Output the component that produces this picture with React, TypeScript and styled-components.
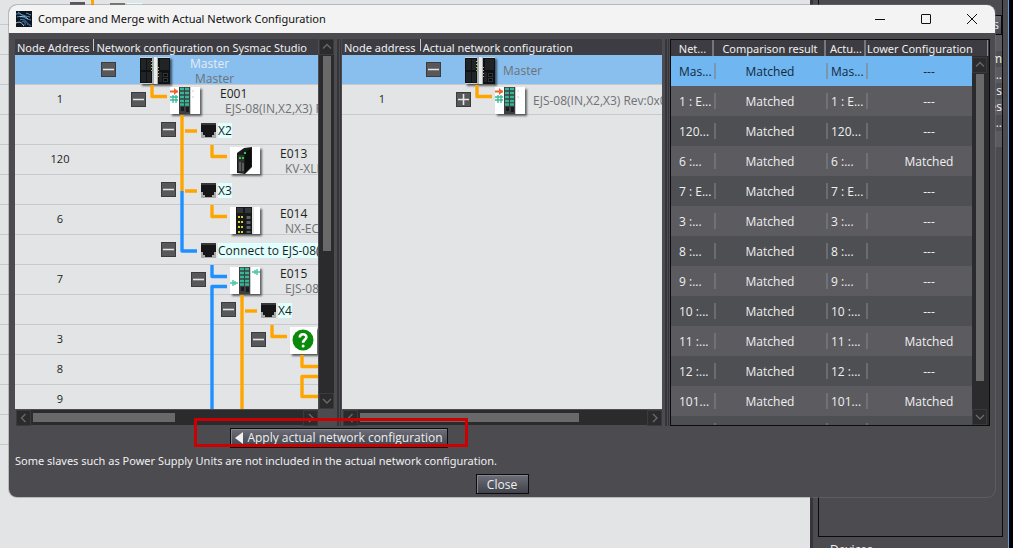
import React from "react";
import styled, { createGlobalStyle, css } from "styled-components";

const ORANGE = "#ffa500";
const BLUE = "#1e90ff";

const GlobalStyle = createGlobalStyle`
  * { box-sizing: border-box; }
  html, body, #root { height: 100%; margin: 0; }
  body {
    overflow: hidden;
    background: #4c4b50;
    color: #f0f0f0;
    font: 12px/16px "Open Sans", "Noto Sans", sans-serif;
  }
  button { font: inherit; color: inherit; padding: 0; border: 0; background: none; }
  svg { display: block; flex: none; }
`;

const captionFont = css`
  font-family: "Noto Sans", "Open Sans", sans-serif;
  font-size: 11px;
  font-weight: 400;
`;

/* ---------- application behind the dialog ---------- */

const Screen = styled.div`
  position: relative;
  height: 100%;
`;

const Backdrop = styled.div`
  display: flex;
  height: 100%;
  overflow: hidden;
`;

const EditorCanvas = styled.div`
  flex: 1;
  min-width: 0;
  background: #e2e4e6;
`;

const EditorLines = styled.div`
  height: 475px;
  padding-left: 70px;
  background: repeating-linear-gradient(#e2e4e6 0 29px, #c8c9ca 29px 30px) 0 -5px;
`;

const Gutter = styled.div`
  width: 8px;
  background: linear-gradient(90deg, #36363a 0 3px, #4c4b50 3px);
`;

const SidePane = styled.aside`
  width: 185px;
  display: flex;
  flex-direction: column;
`;

const SettingsBox = styled.section`
  flex: 1;
  min-height: 0;
  border: solid #0c0c0e;
  border-width: 0 1px 1px;
`;

const SettingsTitle = styled.h2`
  height: 15px;
  margin: 0;
  padding-right: 32px;
  text-align: right;
  font-size: 12px;
  line-height: 20px;
  font-weight: 400;
`;

const SideButton = styled.button`
  display: block;
  width: 100%;
  height: 20px;
  padding-right: 2px;
  text-align: right;
  border: 1px solid #0c0c0e;
  background: linear-gradient(#6d6e78, #45464e);
`;

const SideRow = styled.div<{ $alt?: boolean }>`
  height: 16px;
  text-align: right;
  background: ${(p) => (p.$alt ? "#4f5054" : "#5c5b60")};
`;

const DevicesTitle = styled.h2`
  height: 11px;
  margin: 0;
  padding: 5px 12px 0;
  font-size: 12px;
  line-height: 16px;
  font-weight: 400;
  overflow: hidden;
`;

const ScreenEdge = styled.div`
  width: 10px;
  background: linear-gradient(90deg, #4c4b50 0 5px, #5ba0e0 5px 6px, #000 6px);
`;

/* ---------- dialog frame ---------- */

const Dialog = styled.div`
  position: absolute;
  inset: 5px 18px 51px 9px;
  display: flex;
  flex-direction: column;
  overflow: hidden;
  border-radius: 8px;
  background: #4c4b50;
  box-shadow: 0 0 0 1px #77777a66;
`;

const TitleBar = styled.header`
  display: flex;
  align-items: center;
  flex: none;
  height: 28px;
  padding-left: 7px;
  background: #f3f3f3;
  color: #111;
`;

const Title = styled.h1`
  flex: 1;
  margin: 0 0 0 6px;
  ${captionFont}
  white-space: nowrap;
`;

const WindowButton = styled.button`
  display: grid;
  place-items: center;
  width: 46px;
  height: 28px;
`;

const Panels = styled.main`
  flex: 1;
  min-height: 0;
  display: grid;
  grid-template-columns: minmax(0, 320fr) 7px minmax(0, 321fr) 7px minmax(0, 320fr);
  grid-template-rows: minmax(0, 1fr) 22px;
  padding: 6px 5px 0 6px;
`;

const Splitter = styled.div`
  margin: 0 1px 0 2px;
  border: solid #36363a;
  border-width: 0 1px 0 2px;
`;

/* ---------- scroll bars ---------- */

const Bar = styled.div<{ $horizontal?: boolean }>`
  display: flex;
  background: #2b2b2d;
  ${(p) =>
    p.$horizontal
      ? css`flex-direction: row; height: 15px; margin-left: 1px;`
      : css`flex-direction: column; width: 15px;`}
`;

const BarButton = styled.button`
  display: grid;
  place-items: center;
  flex: none;
  width: 15px;
  height: 16px;
  border: 1px solid #3a3a3d;
`;

const Track = styled.div<{ $horizontal?: boolean }>`
  flex: 1;
  min-width: 0;
  min-height: 0;
  padding: ${(p) => (p.$horizontal ? "3px 2px" : "1px 4px")};
`;

const Thumb = styled.div<{ $horizontal?: boolean; $size: number }>`
  background: #69696a;
  ${(p) =>
    p.$horizontal
      ? css`width: ${p.$size}%; height: 9px;`
      : css`height: ${p.$size}%; width: 8px;`}
`;

const arrows = {
  up: "M1 6.5 5 2.5 9 6.5",
  down: "M1 3 5 7 9 3",
  left: "M6.5 1 2.5 5 6.5 9",
  right: "M3 1 7 5 3 9",
};

function Arrow({ to }: { to: keyof typeof arrows }) {
  return (
    <svg width="10" height="10" viewBox="0 0 10 10" fill="none" stroke="#69696c" strokeWidth="1.4">
      <path d={arrows[to]} />
    </svg>
  );
}

function ScrollBar({ horizontal, size }: { horizontal?: boolean; size: number }) {
  return (
    <Bar $horizontal={horizontal}>
      <BarButton aria-label={horizontal ? "Scroll left" : "Scroll up"}>
        <Arrow to={horizontal ? "left" : "up"} />
      </BarButton>
      <Track $horizontal={horizontal}>
        <Thumb $horizontal={horizontal} $size={size} />
      </Track>
      <BarButton aria-label={horizontal ? "Scroll right" : "Scroll down"}>
        <Arrow to={horizontal ? "right" : "down"} />
      </BarButton>
    </Bar>
  );
}

/* ---------- device trees ---------- */

const TreePanel = styled.section<{ $vertical?: boolean }>`
  min-height: 0;
  display: grid;
  grid-template-columns: minmax(0, 1fr) ${(p) => (p.$vertical ? "15px" : "")};
  grid-template-rows: minmax(0, 1fr) 15px;
  gap: 1px;
  padding: 0 1px 1px 0;
`;

const TreeView = styled.div`
  display: flex;
  flex-direction: column;
  min-height: 0;
  overflow: hidden;
  background: #e2e4e6;
`;

const TreeHeader = styled.div`
  display: flex;
  flex: none;
  height: 16px;
  padding-left: 2px;
  background: #3c3c42;
  white-space: nowrap;
  line-height: 18px;
  ${captionFont}
`;

const HeaderCell = styled.span`
  & + & {
    height: 12px;
    margin-left: 4px;
    padding-left: 2px;
    border-left: 1px solid #c8c8c8;
  }
`;

const TreeList = styled.ul`
  flex: 1;
  min-height: 0;
  margin: 0;
  padding: 0;
  overflow: hidden;
  list-style: none;
`;

const TreeRow = styled.li<{ $selected?: boolean }>`
  display: flex;
  align-items: flex-start;
  height: 30px;
  color: #1e1e20;
  white-space: nowrap;
  background: linear-gradient(transparent 29px, #c8c9ca 29px) ${(p) => (p.$selected ? "#88bfee" : "#e2e4e6")};
`;

const Address = styled.span<{ $wide?: boolean }>`
  flex: none;
  width: ${(p) => (p.$wide ? 86 : 84)}px;
  padding: ${(p) => (p.$wide ? "0 0 0 4px" : "0 4px 0 0")};
  line-height: 28px;
  font-size: 11px;
  text-align: center;
`;

const ToggleSlot = styled.span`
  flex: none;
  width: 15px;
  padding-top: 7px;
`;

const ToggleButton = styled.button`
  display: grid;
  place-items: center;
  width: 15px;
  height: 15px;
  background: #58585a;
  border: 1px solid #3c3c3e;
`;

const DeviceIcon = styled.span`
  flex: none;
  margin-top: 2px;
  height: 27px;
  box-shadow: 2px 2px 2px #00000090;
`;

const Names = styled.span<{ $center?: boolean }>`
  display: flex;
  flex-direction: column;
  padding-left: ${(p) => (p.$center ? 8 : 20)}px;
  padding-top: ${(p) => (p.$center ? 8 : 1)}px;
  line-height: 15px;
`;

const DeviceName = styled.span<{ $light?: boolean }>`
  color: ${(p) => (p.$light ? "#e6ecf2" : "#1e1e20")};
`;

const ModelName = styled.span<{ $indent?: boolean }>`
  padding-left: ${(p) => (p.$indent ? 5 : 0)}px;
  color: #707174;
`;

const PortIcon = styled.span`
  flex: none;
  margin-top: 8px;
  padding-left: 1px;
`;

const PortLabel = styled.span`
  margin: 8px 0 0 2px;
  line-height: 15px;
  background: #e0ffff;
`;

type Line = "none" | "orange" | "blue";
type Joint = "none" | "device" | "port" | "portSwitch" | "portEnd" | "deviceBlue" | "deviceLoop" | "deviceJoin";
type Art = "cpu" | "junction" | "junctionOut" | "keyence" | "coupler" | "unknown" | "port" | "empty";

interface Node {
  address?: string;
  depth: number;
  lines?: Line[];
  toggle?: "open" | "closed";
  joint?: Joint;
  art: Art;
  name?: string;
  model?: string;
  label?: string;
  selected?: boolean;
}

const lineColor = { orange: ORANGE, blue: BLUE, none: "none" };

function Through({ line }: { line: Line }) {
  return (
    <svg width="30" height="30" viewBox="0 0 30 30">
      {line !== "none" && <path d="M21 0V30" stroke={lineColor[line]} strokeWidth="3.4" />}
    </svg>
  );
}

const jointPaths: Record<Joint, { d: string; color: string }[]> = {
  none: [],
  device: [{ d: "M6 0V11.500H21", color: ORANGE }],
  deviceBlue: [
    { d: "M6 0V11.500H21", color: BLUE },
    { d: "M6 30V21.500H21", color: BLUE },
  ],
  deviceLoop: [
    { d: "M6 0V11.500H24", color: ORANGE },
    { d: "M6 30V21.500H24", color: ORANGE },
  ],
  deviceJoin: [{ d: "M6 0V11.500H24", color: ORANGE }],
  port: [
    { d: "M6 0V30", color: ORANGE },
    { d: "M9 16H21", color: ORANGE },
  ],
  portSwitch: [
    { d: "M6 0V16", color: ORANGE },
    { d: "M9 16H21", color: ORANGE },
    { d: "M6 16V30", color: BLUE },
  ],
  portEnd: [{ d: "M6 0V16H21", color: BLUE }],
};

function JointLines({ joint }: { joint: Joint }) {
  return (
    <svg width="24" height="30" viewBox="0 0 24 30" fill="none" strokeWidth="3.4" strokeLinejoin="round">
      {jointPaths[joint].map((p) => (
        <path key={p.d} d={p.d} stroke={p.color} />
      ))}
    </svg>
  );
}

function Junction({ out }: { out?: boolean }) {
  return (
    <svg width="30" height="27" viewBox="0 0 30 27">
      <path fill="#fff" d="M0 0H30V27H0z" />
      <path fill="#3c3f42" d="M9 0H20V27H9z" />
      <path fill="#c9cccd" d="M20 0H21V27H20z" />
      <path stroke="#35b896" strokeWidth="2.400" strokeDasharray="4 1" d="M10 2H19M10 6H19M10 10H19M10 14H19M10 17.500H19" />
      <path fill="#191b1d" d="M11 20H14V24H11zM16 20H19V25H16z" />
      {out ? (
        <g stroke="#4cc5a8" strokeWidth="1.500">
          <path d="M22 5H30M27 2V8M25 3V7M0 16H8M3 13V19M5 14V18" />
        </g>
      ) : (
        <g>
          <path stroke="#f0642d" strokeWidth="2" d="M0 4.500H8" />
          <path fill="#f0642d" d="M4 1 8 4.500 4 8z" />
          <path stroke="#35b896" strokeWidth="1.300" d="M0 10H8M0 13H8M3 8V16M6 8V16" />
          <path stroke="#ccccdd" strokeWidth="1" d="M22 4H24M22 10H24" />
        </g>
      )}
    </svg>
  );
}

function Picture({ art }: { art: Art }) {
  switch (art) {
    case "cpu":
      return (
        <svg width="30" height="27" viewBox="0 0 30 27">
          <path fill="#0f1113" d="M0 0H30V27H0z" />
          <path fill="#cfd2d4" d="M0 0H30V1H0zM0 26H13V27H0z" />
          <path fill="#202427" d="M1 2H6V13H1zM7 2H11V13H7zM1 15H6V25H1zM7 15H11V25H7zM20 2H29V13H20zM19 15H22V25H19z" />
          <path fill="#e9ebec" d="M14 0H17V27H14z" />
          <path fill="#aab0b3" d="M12 0H14V27H12zM17 0H18V27H17z" />
          <path stroke="#d6a94a" strokeWidth="1" strokeDasharray="1 2" d="M11.500 4V14M18.500 10V22" />
          <path stroke="#5aa56a" strokeWidth="1" strokeDasharray="1 3" d="M12.500 5V14" />
          <path fill="#2f3437" d="M23 16H28V20H23zM23 21H28V25H23z" />
          <path fill="#08090a" d="M24 17H27V19H24zM24 22H27V24H24z" />
        </svg>
      );
    case "junction":
      return <Junction />;
    case "junctionOut":
      return <Junction out />;
    case "keyence":
      return (
        <svg width="30" height="27" viewBox="0 0 30 27">
          <path fill="#fff" d="M0 0H30V27H0z" />
          <path fill="#1a1b1c" d="M7 6 14 1 22 0V20L15 27 7 26z" />
          <path fill="#2e3031" d="M8 8H14V26L8 25z" />
          <path fill="#0b0c0c" d="M15 6 21 1V19L15 26z" />
          <path fill="#2ecc40" d="M9 10H11V12H9zM12 10H14V12H12zM14 5H16V7H14z" />
          <path stroke="#888888" strokeWidth="1" d="M10 15V24M13 16V24" />
        </svg>
      );
    case "coupler":
      return (
        <svg width="30" height="27" viewBox="0 0 30 27">
          <path fill="#fff" d="M0 0H30V27H0z" />
          <path fill="#17191a" d="M6 0H22V27H6z" />
          <path fill="#33373a" d="M7 1H13V6H7zM15 1H21V6H15z" />
          <path stroke="#d9d829" strokeWidth="2" strokeDasharray="2 3" d="M9 9V26M12 9V26" />
          <path stroke="#5d6163" strokeWidth="4" strokeDasharray="3 2" d="M18.500 9V26" />
          <path fill="#e3e5e6" d="M22 0H24V27H22z" />
        </svg>
      );
    case "unknown":
      return (
        <svg width="27" height="27" viewBox="0 0 27 27">
          <path fill="#fff" d="M0 0H27V27H0z" />
          <circle cx="13" cy="13" r="10.500" fill="#0a8a0a" />
          <path fill="none" stroke="#fff" strokeWidth="2.600" d="M9.800 10.500C9.800 6.300 16.400 6.300 16.400 10.100 16.400 12.600 13.100 12.600 13.100 15.800" />
          <circle cx="13.100" cy="19" r="1.500" fill="#fff" />
        </svg>
      );
    case "port":
      return (
        <svg width="15" height="15" viewBox="0 0 15 15">
          <path fill="#161618" d="M0 0H15V15H0z" />
          <path fill="#a9a9aa" d="M0 9H2V12H4V14H11V12H13V9H15V15H0z" />
          <path fill="#3a3a3c" d="M0 0H15V2H0z" />
        </svg>
      );
    default:
      return null;
  }
}

function TreeNode({ node, side }: { node: Node; side: "studio" | "actual" }) {
  const { depth, lines = [], joint = "none", toggle, art } = node;
  const centered = side === "actual";
  return (
    <TreeRow role="treeitem" aria-level={depth + 1} aria-selected={!!node.selected} $selected={node.selected}>
      <Address $wide={!centered}>{node.address}</Address>
      {Array.from({ length: depth }, (_, i) => (
        <Through key={i} line={lines[i] ?? "none"} />
      ))}
      <ToggleSlot>
        {toggle && (
          <ToggleButton aria-label={toggle === "open" ? "Collapse" : "Expand"}>
            <svg width="11" height="11" viewBox="0 0 11 11" stroke="#e6e6e6" strokeWidth="1.600">
              <path d={toggle === "open" ? "M0 5.500H11" : "M0 5.500H11M5.500 0V11"} />
            </svg>
          </ToggleButton>
        )}
      </ToggleSlot>
      <JointLines joint={joint} />
      {art === "port" && (
        <>
          <PortIcon><Picture art="port" /></PortIcon>
          <PortLabel>{node.label}</PortLabel>
        </>
      )}
      {art !== "port" && art !== "empty" && (
        <DeviceIcon><Picture art={art} /></DeviceIcon>
      )}
      {node.model && (
        <Names $center={centered}>
          {node.name && <DeviceName $light={node.selected}>{node.name}</DeviceName>}
          <ModelName $indent={!centered}>{node.model}</ModelName>
        </Names>
      )}
    </TreeRow>
  );
}

const studioNodes: Node[] = [
  { depth: 0, toggle: "open", art: "cpu", name: "Master", model: "Master", selected: true },
  { address: "1", depth: 1, toggle: "open", joint: "device", art: "junction", name: "E001", model: "EJS-08(IN,X2,X3) Rev:0x0" },
  { depth: 2, toggle: "open", joint: "port", art: "port", label: "X2" },
  { address: "120", depth: 3, lines: ["none", "none", "orange"], joint: "device", art: "keyence", name: "E013", model: "KV-XLE" },
  { depth: 2, toggle: "open", joint: "portSwitch", art: "port", label: "X3" },
  { address: "6", depth: 3, lines: ["none", "none", "blue"], joint: "device", art: "coupler", name: "E014", model: "NX-ECC" },
  { depth: 2, toggle: "open", joint: "portEnd", art: "port", label: "Connect to EJS-08(" },
  { address: "7", depth: 3, toggle: "open", joint: "deviceBlue", art: "junctionOut", name: "E015", model: "EJS-08(" },
  { depth: 4, lines: ["none", "none", "none", "blue"], toggle: "open", joint: "port", art: "port", label: "X4" },
  { address: "3", depth: 5, lines: ["none", "none", "none", "blue", "orange"], toggle: "open", joint: "device", art: "unknown" },
  { address: "8", depth: 6, lines: ["none", "none", "none", "blue", "orange"], joint: "deviceLoop", art: "empty" },
  { address: "9", depth: 6, lines: ["none", "none", "none", "blue", "orange"], joint: "deviceJoin", art: "empty" },
];

const actualNodes: Node[] = [
  { depth: 0, toggle: "open", art: "cpu", model: "Master", selected: true },
  { address: "1", depth: 1, toggle: "closed", joint: "device", art: "junction", model: "EJS-08(IN,X2,X3) Rev:0x0" },
];

/* ---------- comparison table ---------- */

const TablePanel = styled.section`
  display: flex;
  min-height: 0;
  border: 1px solid #0c0c0e;
  background: #3c3c42;
`;

const TableArea = styled.div`
  position: relative;
  flex: 1;
  min-width: 0;
  overflow-x: visible;
  overflow-y: clip;
`;

const TableSide = styled.div`
  display: grid;
  grid-template-rows: 17px minmax(0, 1fr);
  width: 17px;
  background: linear-gradient(90deg, #3c3c42 15px, #8a8a8c 15px 16px, #3c3c42 16px) 0 0 / 100% 16px no-repeat #2b2b2d;
`;

const ResultTable = styled.table`
  width: 100%;
  table-layout: fixed;
  border-collapse: collapse;
`;

const Col = styled.col<{ $width?: number }>`
  width: ${(p) => (p.$width ? `${p.$width}px` : "auto")};
`;

const HeadCell = styled.th<{ $last?: boolean }>`
  height: 16px;
  padding: ${(p) => (p.$last ? "2px 0 0 1px" : "2px 0 0")};
  ${captionFont}
  line-height: 14px;
  white-space: nowrap;
  text-align: ${(p) => (p.$last ? "left" : "center")};
  background: ${(p) => (p.$last ? "none" : "linear-gradient(#77777a, #77777a) 100% 0 / 2px 100% no-repeat")};
`;

const ResultRow = styled.tr<{ $selected: boolean }>`
  height: 30px;
  background: #4e4f52;
  &:nth-child(even) { background: #5c5b60; }
  ${(p) => p.$selected && css`&& { background: #70b7f2; color: #14283a; }`}
`;

const Cell = styled.td<{ $indent?: number; $value?: boolean }>`
  padding: 2px 0 0 ${(p) => p.$indent ?? 0}px;
  white-space: nowrap;
  text-align: ${(p) => (p.$indent && !p.$value ? "left" : "center")};
  & + & { background: linear-gradient(#80808499, #80808499) 0 50% / 2px 16px no-repeat; }
`;

const results: [string, string][] = [
  ["Mas...", "---"], ["1 : E...", "---"], ["120...", "---"], ["6 :...", "Matched"],
  ["7 : E...", "---"], ["3 :...", "---"], ["8 :...", "---"], ["9 :...", "---"],
  ["10 :...", "---"], ["11 :...", "Matched"], ["12 :...", "---"], ["101...", "Matched"],
  ["", ""],
];

/* ---------- footer ---------- */

const PushButton = styled.button`
  display: flex;
  align-items: center;
  justify-content: center;
  gap: 4px;
  height: 20px;
  padding: 0 4px;
  color: #f0f0f0;
  border: 1px solid #0c0c0e;
  box-shadow: inset 1px 1px #85868f;
  background: linear-gradient(#6d6e78, #41434c);
  white-space: nowrap;
`;

const ApplySlot = styled.div`
  grid-column: 1 / 4;
  justify-self: center;
  align-self: end;
  position: relative;
`;

const Highlight = styled.div`
  position: absolute;
  inset: -10px -20px 1px -36px;
  border: 3px solid #cc0000;
  pointer-events: none;
`;

const Footer = styled.footer`
  display: flex;
  flex-direction: column;
  gap: 5px;
  padding: 5px 6px 3px;
`;

const Note = styled.p`
  margin: 0;
  ${captionFont}
  white-space: nowrap;
`;

const CloseButton = styled(PushButton)`
  align-self: center;
  width: 53px;
  padding-top: 1px;
`;

export default function App() {
  return (
    <Screen>
      <GlobalStyle />
      <Backdrop>
        <EditorCanvas>
          <EditorLines>
            <svg width="80" height="5" viewBox="0 0 80 5">
              <path fill="#58585a" d="M0 2H15V5H0z" />
              <path fill={ORANGE} d="M21 0H24V5H21z" />
              <path fill="#77766e" d="M40 3H55V5H40z" />
              <path fill="#e0ffff" d="M57 3H72V5H57z" />
            </svg>
          </EditorLines>
        </EditorCanvas>
        <Gutter />
        <SidePane>
          <SettingsBox>
            <SettingsTitle>Settings</SettingsTitle>
            <SideButton>s</SideButton>
            <SideRow />
            <SideRow $alt>m</SideRow>
            <SideRow>...</SideRow>
            <SideRow $alt>s</SideRow>
            <SideRow>es</SideRow>
            <SideRow $alt>...</SideRow>
            <SideRow />
          </SettingsBox>
          <DevicesTitle>Devices</DevicesTitle>
        </SidePane>
        <ScreenEdge />
      </Backdrop>

      <Dialog role="dialog" aria-labelledby="dialog-title">
        <TitleBar>
          <svg width="16" height="16" viewBox="0 0 16 16" fill="none">
            <path fill="#0c1420" d="M0 0H16V16H0z" />
            <path stroke="#5a8fc4" strokeWidth="1" d="M0 3C5 2 7 5 14 6M1 6C6 4 9 8 15 9M4 9C7 7 11 10 12 14M2 1 5 3M10 2 15 4" />
            <path stroke="#b8d4ea" strokeWidth="1" d="M4 6C7 4 10 6 12 8M0 12C4 10 6 12 8 15" />
            <path stroke="#2d5f94" strokeWidth="1.500" d="M6 11C8 9 10 12 9 14M11 12 15 15" />
          </svg>
          <Title id="dialog-title">Compare and Merge with Actual Network Configuration</Title>
          <WindowButton aria-label="Minimize">
            <svg width="10" height="10" viewBox="0 0 10 10" stroke="#111"><path d="M0 5.500H10" /></svg>
          </WindowButton>
          <WindowButton aria-label="Maximize">
            <svg width="10" height="10" viewBox="0 0 10 10" stroke="#111" fill="none">
              <rect x=".5" y=".5" width="9" height="9" rx=".5" />
            </svg>
          </WindowButton>
          <WindowButton aria-label="Close window">
            <svg width="10" height="10" viewBox="0 0 10 10" stroke="#111"><path d="M0 0 10 10M10 0 0 10" /></svg>
          </WindowButton>
        </TitleBar>

        <Panels>
          <TreePanel $vertical>
            <TreeView>
              <TreeHeader>
                <HeaderCell>Node Address</HeaderCell>
                <HeaderCell>Network configuration on Sysmac Studio</HeaderCell>
              </TreeHeader>
              <TreeList role="tree">
                {studioNodes.map((n, i) => <TreeNode key={i} node={n} side="studio" />)}
              </TreeList>
            </TreeView>
            <ScrollBar size={58} />
            <ScrollBar horizontal size={53} />
          </TreePanel>
          <Splitter />
          <TreePanel>
            <TreeView>
              <TreeHeader>
                <HeaderCell>Node address</HeaderCell>
                <HeaderCell>Actual network configuration</HeaderCell>
              </TreeHeader>
              <TreeList role="tree">
                {actualNodes.map((n, i) => <TreeNode key={i} node={n} side="actual" />)}
              </TreeList>
            </TreeView>
            <ScrollBar horizontal size={77} />
          </TreePanel>
          <Splitter />
          <TablePanel>
            <TableArea>
              <ResultTable>
                <colgroup>
                  <Col $width={43} />
                  <Col $width={112} />
                  <Col $width={40} />
                  <Col />
                </colgroup>
                <thead>
                  <tr>
                    <HeadCell>Net...</HeadCell>
                    <HeadCell>Comparison result</HeadCell>
                    <HeadCell>Actu...</HeadCell>
                    <HeadCell $last>Lower Configuration</HeadCell>
                  </tr>
                </thead>
                <tbody>
                  {results.map(([id, lower], i) => (
                    <ResultRow key={i} $selected={i === 0}>
                      <Cell $indent={8}>{id}</Cell>
                      <Cell>{id && "Matched"}</Cell>
                      <Cell $indent={5}>{id}</Cell>
                      <Cell $indent={20} $value>{lower}</Cell>
                    </ResultRow>
                  ))}
                </tbody>
              </ResultTable>
            </TableArea>
            <TableSide>
              <span />
              <ScrollBar size={92} />
            </TableSide>
          </TablePanel>
          <ApplySlot>
            <PushButton>
              <svg width="8" height="12" viewBox="0 0 8 12" fill="#f0f0f0"><path d="M8 0V12L0 6z" /></svg>
              Apply actual network configuration
            </PushButton>
            <Highlight />
          </ApplySlot>
        </Panels>

        <Footer>
          <Note>Some slaves such as Power Supply Units are not included in the actual network configuration.</Note>
          <CloseButton>Close</CloseButton>
        </Footer>
      </Dialog>
    </Screen>
  );
}
